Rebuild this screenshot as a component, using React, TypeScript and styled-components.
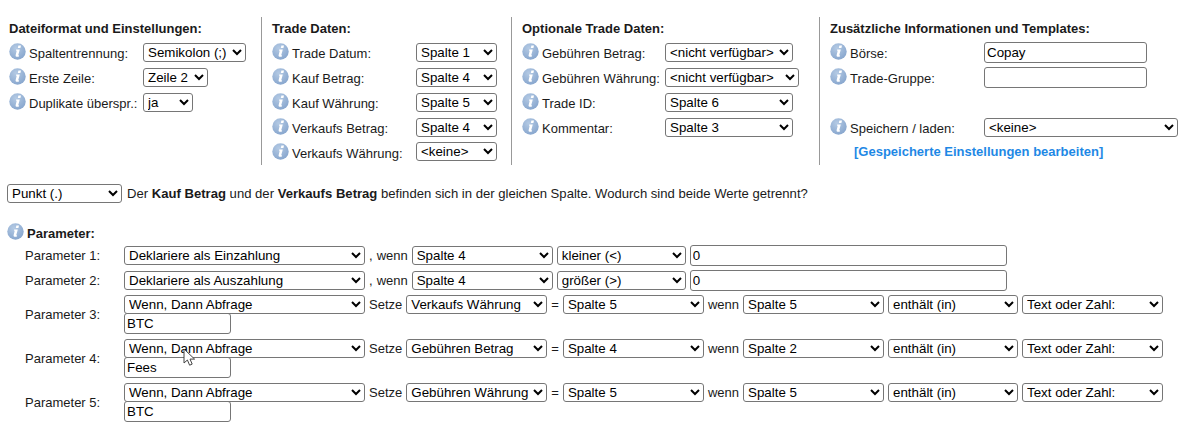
import * as React from 'react';
import styled, { createGlobalStyle } from 'styled-components';

const Global = createGlobalStyle`
    html, body {
        margin: 0;
        background: #fff;
    }
    body {
        font-family: "Liberation Sans", Arial, sans-serif;
        font-size: 13px;
        color: #1a1a1a;
    }
    select, input {
        font-family: "Liberation Sans", Arial, sans-serif;
        font-size: 13.33px;
        color: #000;
    }
`;

const Info = () => (
    <InfoIcon viewBox="0 0 17 17" width="17" height="17">
        <defs>
            <radialGradient id="infoGrad" cx="40%" cy="30%" r="75%">
                <stop offset="0%" stopColor="#b4cae4" />
                <stop offset="100%" stopColor="#86a5cd" />
            </radialGradient>
        </defs>
        <circle cx="8.5" cy="8.5" r="8.2" fill="url(#infoGrad)" />
        <path d="M9.4 2.6h2.6l-.6 2.4H8.8zM7.2 6.4h3.6l-1.5 5.6c-.1.4.1.5.8.3l-.2 1.1c-1.2.5-3.6.7-3.3-1.1l1.1-4.6-.8-.3z" fill="#fff" />
    </InfoIcon>
);

const Cursor = () => (
    <CursorIcon viewBox="0 0 14 20" width="14" height="20">
        <path d="M1 1v14l3.4-3 2.2 5.2 2.6-1.1-2.2-5h4.6z" fill="#fff" stroke="#444" strokeWidth="1" />
    </CursorIcon>
);

type Field =
    | { label: string; value: string; width: number }
    | { label: string; input: string; width: number }
    | { spacer: true };

const columns: { title: string; width: number; labelWidth: number; fields: Field[] }[] = [
    {
        title: 'Dateiformat und Einstellungen:',
        width: 261,
        labelWidth: 134,
        fields: [
            { label: 'Spaltentrennung:', value: 'Semikolon (;)', width: 103 },
            { label: 'Erste Zeile:', value: 'Zeile 2', width: 65 },
            { label: 'Duplikate überspr.:', value: 'ja', width: 50 },
        ],
    },
    {
        title: 'Trade Daten:',
        width: 250,
        labelWidth: 144,
        fields: [
            { label: 'Trade Datum:', value: 'Spalte 1', width: 81 },
            { label: 'Kauf Betrag:', value: 'Spalte 4', width: 81 },
            { label: 'Kauf Währung:', value: 'Spalte 5', width: 81 },
            { label: 'Verkaufs Betrag:', value: 'Spalte 4', width: 81 },
            { label: 'Verkaufs Währung:', value: '<keine>', width: 81 },
        ],
    },
    {
        title: 'Optionale Trade Daten:',
        width: 308,
        labelWidth: 143,
        fields: [
            { label: 'Gebühren Betrag:', value: '<nicht verfügbar>', width: 128 },
            { label: 'Gebühren Währung:', value: '<nicht verfügbar>', width: 134 },
            { label: 'Trade ID:', value: 'Spalte 6', width: 128 },
            { label: 'Kommentar:', value: 'Spalte 3', width: 128 },
        ],
    },
    {
        title: 'Zusätzliche Informationen und Templates:',
        width: 364,
        labelWidth: 154,
        fields: [
            { label: 'Börse:', input: 'Copay', width: 163 },
            { label: 'Trade-Gruppe:', input: '', width: 163 },
            { spacer: true },
            { label: 'Speichern / laden:', value: '<keine>', width: 194 },
        ],
    },
];

const conditions = [
    { target: 'Verkaufs Währung', source: 'Spalte 5', column: 'Spalte 5', text: 'BTC' },
    { target: 'Gebühren Betrag', source: 'Spalte 4', column: 'Spalte 2', text: 'Fees' },
    { target: 'Gebühren Währung', source: 'Spalte 5', column: 'Spalte 5', text: 'BTC' },
];

const Choice = ({ value, width }: { value: string; width: number }) => (
    <Select $width={width} defaultValue={value}>
        <option>{value}</option>
    </Select>
);

export default function App() {
    return (
        <Page>
            <Global />
            <Columns>
                {columns.map((col, i) => (
                    <Column key={col.title} $width={col.width} $first={i === 0}>
                        <Title>{col.title}</Title>
                        {col.fields.map((f, j) =>
                            'spacer' in f ? (
                                <Spacer key={j} />
                            ) : (
                                <FieldRow key={f.label} $labelWidth={col.labelWidth}>
                                    <FieldLabel>
                                        <Info />
                                        {f.label}
                                    </FieldLabel>
                                    {'value' in f ? (
                                        <Choice value={f.value} width={f.width} />
                                    ) : (
                                        <TextInput $width={f.width} defaultValue={f.input} />
                                    )}
                                </FieldRow>
                            ),
                        )}
                        {i === 3 && <EditLink>[Gespeicherte Einstellungen bearbeiten]</EditLink>}
                    </Column>
                ))}
            </Columns>

            <SeparatorRow>
                <Choice value="Punkt (.)" width={115} />
                <Sentence>
                    Der <b>Kauf Betrag</b> und der <b>Verkaufs Betrag</b> befinden sich in der gleichen Spalte.
                    Wodurch sind beide Werte getrennt?
                </Sentence>
            </SeparatorRow>

            <ParamTitle>
                <Info />
                <b>Parameter:</b>
            </ParamTitle>

            <ParamRow>
                <ParamLabel>Parameter 1:</ParamLabel>
                <ParamBody>
                    <Choice value="Deklariere als Einzahlung" width={241} /> , wenn{' '}
                    <Choice value="Spalte 4" width={141} /> <Choice value="kleiner (<)" width={129} />{' '}
                    <TextInput $width={317} defaultValue="0" />
                </ParamBody>
            </ParamRow>
            <ParamRow>
                <ParamLabel>Parameter 2:</ParamLabel>
                <ParamBody>
                    <Choice value="Deklariere als Auszahlung" width={241} /> , wenn{' '}
                    <Choice value="Spalte 4" width={141} /> <Choice value="größer (>)" width={129} />{' '}
                    <TextInput $width={317} defaultValue="0" />
                </ParamBody>
            </ParamRow>
            {conditions.map((c, i) => (
                <ParamRow key={i} $tall>
                    <ParamLabel $raised>Parameter {i + 3}:</ParamLabel>
                    <ParamBody>
                        {i === 1 && <Cursor />}
                        <Choice value="Wenn, Dann Abfrage" width={241} /> Setze{' '}
                        <Choice value={c.target} width={141} /> ={' '}
                        <Choice value={c.source} width={141} /> wenn{' '}
                        <Choice value={c.column} width={141} /> <Choice value="enthält (in)" width={130} />{' '}
                        <Choice value="Text oder Zahl:" width={141} />
                        <WrappedInput defaultValue={c.text} />
                    </ParamBody>
                </ParamRow>
            ))}
        </Page>
    );
}

const Page = styled.div`
    width: 1183px;
    height: 425px;
    overflow: hidden;
    padding-top: 17px;
    box-sizing: border-box;
`;

const Columns = styled.div`
    display: flex;
    height: 148px;
`;

const Column = styled.div<{ $width: number; $first: boolean }>`
    width: ${p => p.$width}px;
    box-sizing: border-box;
    padding-left: ${p => (p.$first ? 9 : 10)}px;
    border-left: ${p => (p.$first ? 'none' : '1px solid #999')};
`;

const Title = styled.div`
    font-weight: bold;
    line-height: 15px;
    height: 24px;
    padding-top: 4px;
    box-sizing: border-box;
`;

const FieldRow = styled.div<{ $labelWidth: number }>`
    display: grid;
    grid-template-columns: ${p => p.$labelWidth}px auto;
    justify-content: start;
    align-items: center;
    height: 25px;

    select, input {
        margin-bottom: 2px;
    }

    &:nth-child(6) select {
        margin-bottom: 4px;
    }
`;

const Spacer = styled.div`
    height: 25px;
`;

const FieldLabel = styled.div`
    display: flex;
    align-items: center;
    white-space: nowrap;
`;

const InfoIcon = styled.svg`
    flex: none;
    margin: -4px 3px 0 0;
`;

const Select = styled.select<{ $width: number }>`
    width: ${p => p.$width}px;
    height: 19px;
    box-sizing: border-box;
    border: 1px solid #767676;
    border-radius: 3px;
    background-color: #fff;
`;

const TextInput = styled.input<{ $width: number }>`
    width: ${p => p.$width}px;
    height: 21px;
    box-sizing: border-box;
    border: 1px solid #767676;
    border-radius: 3px;
`;

const WrappedInput = styled.input`
    display: block;
    width: 107px;
    height: 21px;
    box-sizing: border-box;
    border: 1px solid #767676;
    border-radius: 3px;
    margin: -1px 0 1px;
`;

const EditLink = styled.div`
    color: #1e88e5;
    font-weight: bold;
    margin: 3px 0 0 24px;
`;

const SeparatorRow = styled.div`
    display: flex;
    align-items: center;
    gap: 5px;
    margin: 17px 0 0 7px;
    height: 22px;
`;

const Sentence = styled.span`
    font-size: 13.1px;
`;

const ParamTitle = styled.div`
    display: flex;
    align-items: center;
    margin: 19px 0 0 7px;
    height: 20px;
`;

const ParamRow = styled.div<{ $tall?: boolean }>`
    display: grid;
    grid-template-columns: 99px 1fr;
    align-items: center;
    padding-left: 25px;
    height: ${p => (p.$tall ? 44 : 25)}px;
`;

const ParamLabel = styled.div<{ $raised?: boolean }>`
    white-space: nowrap;
    margin-bottom: ${p => (p.$raised ? 2 : 0)}px;
`;

const ParamBody = styled.div`
    position: relative;
    white-space: nowrap;
    word-spacing: 0.4px;
`;

const CursorIcon = styled.svg`
    position: absolute;
    left: 59px;
    top: 9px;
    z-index: 2;
`;
